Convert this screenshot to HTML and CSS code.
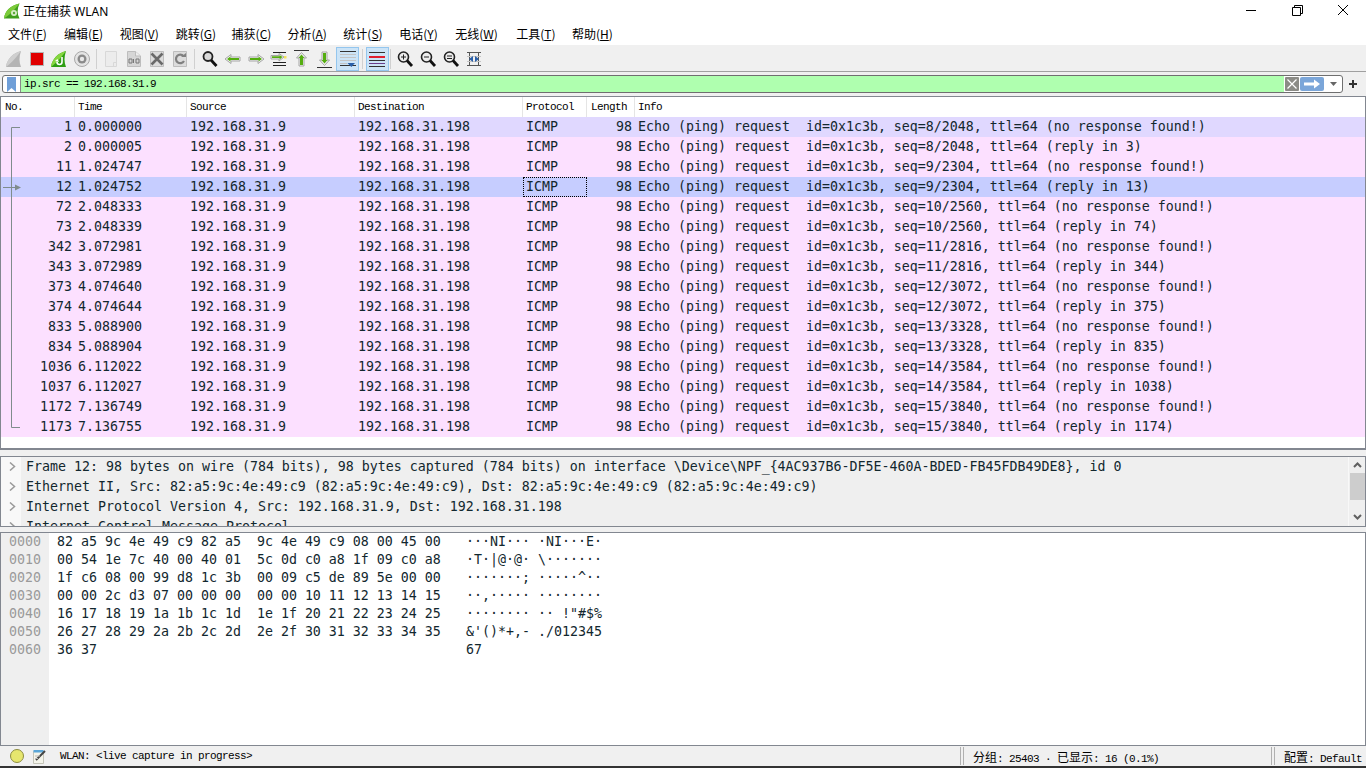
FILE: index.html
```html
<!DOCTYPE html>
<html lang="zh-CN">
<head>
  <meta charset="UTF-8">
  <title>正在捕获 WLAN</title>
  <link rel="stylesheet" href="styles.css">
</head>
<body>
  <div id="app">
    <div class="titlebar">
      <svg class="app-icon" width="16" height="16" viewBox="0 0 16 16"><path d="M0 15.5C1 8 6 2.5 15.5 0.5 13 6 13 11 15.5 15.5Z" fill="#3f9e1c"/><path d="M0 15.5C1 8 6 2.5 15.5 0.5 11 6 7 11 0 15.5Z" fill="#7ccb3a"/><circle cx="10" cy="10" r="3" fill="#d8ecc8"/><circle cx="10" cy="10" r="1.2" fill="#5aa83a"/></svg>
      <span class="title-text">正在捕获 WLAN</span>
      <div class="winbtns">
        <svg width="46" height="22" viewBox="0 0 46 22"><path d="M18 10.5H28" stroke="#000"/></svg>
        <svg width="46" height="22" viewBox="0 0 46 22"><path d="M18.5 7.5H26.5V15.5H18.5ZM20.5 7.5V5.5H28.5V13.5H26.5" fill="none" stroke="#000"/></svg>
        <svg width="46" height="22" viewBox="0 0 46 22"><path d="M18 5L28 15M28 5L18 15" stroke="#000"/></svg>
      </div>
    </div>

    <div class="menubar">
      <span class="menu">文件(<u>F</u>)</span>
      <span class="menu">编辑(<u>E</u>)</span>
      <span class="menu">视图(<u>V</u>)</span>
      <span class="menu">跳转(<u>G</u>)</span>
      <span class="menu">捕获(<u>C</u>)</span>
      <span class="menu">分析(<u>A</u>)</span>
      <span class="menu">统计(<u>S</u>)</span>
      <span class="menu">电话(<u>Y</u>)</span>
      <span class="menu">无线(<u>W</u>)</span>
      <span class="menu">工具(<u>T</u>)</span>
      <span class="menu">帮助(<u>H</u>)</span>
    </div>

    <div class="toolbar">
      <span class="tb tb-first"><svg width="18" height="18" viewBox="0 0 18 18"><path d="M1 17C2 9 8 3 16 1 14 7 14 12 16 17Z" fill="#b4b4b4"/><path d="M1 17C2 9 8 3 16 1 12 6 8 12 1 17Z" fill="#cfcfcf"/></svg></span>
      <span class="tb tb-first"><svg width="16" height="16" viewBox="0 0 16 16"><rect x="1.5" y="1.5" width="13" height="13" fill="#e00000" stroke="#b5b5b5"/></svg></span>
      <span class="tb tb-first"><svg width="18" height="18" viewBox="0 0 18 18"><path d="M1 17C2 9 8 3 16 1 14 7 14 12 16 17Z" fill="#2f9e14"/><path d="M1 17C2 9 8 3 16 1 12 6 8 12 1 17Z" fill="#86d640"/><path d="M12 7V12A2.5 2.5 0 0 1 7 12" fill="none" stroke="#fff" stroke-width="1.6"/><path d="M5 11L7.5 9 9 12Z" fill="#fff"/></svg></span>
      <span class="tb tb-first"><svg width="18" height="18" viewBox="0 0 18 18"><circle cx="9" cy="9" r="7.5" fill="#e4e4e4" stroke="#a8a8a8"/><circle cx="9" cy="9" r="4.5" fill="#8a8a8a"/><circle cx="9" cy="9" r="2.2" fill="#e8e8e8"/></svg></span>
      <span class="tb-sep"></span>
      <span class="tb"><svg width="16" height="18" viewBox="0 0 16 18"><path d="M2.5 1.5H13.5V16.5H2.5Z" fill="#ececec" stroke="#d8d8d8"/><path d="M10.5 16.5V12.5H13.5" fill="none" stroke="#d8d8d8"/></svg></span>
      <span class="tb"><svg width="18" height="18" viewBox="0 0 18 18"><path d="M2.5 1.5H10.5L15.5 6V16.5H2.5Z" fill="#d6d6d6" stroke="#bdbdbd"/><path d="M10.5 1.5V6H15.5" fill="#eee" stroke="#bdbdbd"/><path d="M4 9H7V13H4ZM8.5 9V13M11 9H14V13H11Z" fill="none" stroke="#777"/></svg></span>
      <span class="tb"><svg width="18" height="18" viewBox="0 0 18 18"><path d="M2.5 1.5H15.5V16.5H2.5Z" fill="#dcdcdc" stroke="#bdbdbd"/><path d="M3.5 3.5L14.5 14.5M14.5 3.5L3.5 14.5" stroke="#6a6a6a" stroke-width="2.6"/></svg></span>
      <span class="tb"><svg width="18" height="18" viewBox="0 0 18 18"><path d="M2.5 1.5H15.5V16.5H2.5Z" fill="#dcdcdc" stroke="#bdbdbd"/><path d="M13 11A4.3 4.3 0 1 1 12.5 6" fill="none" stroke="#808080" stroke-width="2.2"/><path d="M10 7H15V3Z" fill="#808080"/></svg></span>
      <span class="tb-sep"></span>
      <span class="tb"><svg width="18" height="18" viewBox="0 0 18 18"><circle cx="7" cy="6.5" r="4.5" fill="#d9d9d9" stroke="#222" stroke-width="1.8"/><path d="M10 10L15.5 16" stroke="#111" stroke-width="2.8"/></svg></span>
      <span class="tb"><svg width="18" height="18" viewBox="0 0 18 18"><path d="M1 9L7 4.5V7H16V11H7V13.5Z" fill="#f1f1f1" stroke="#a6a6a6"/><path d="M3 9L6.500 6.500V8H15V10H6.500V11.500Z" fill="#55ad10"/></svg></span>
      <span class="tb"><svg width="18" height="18" viewBox="0 0 18 18"><path d="M17 9L11 4.500V7H2V11H11V13.500Z" fill="#f1f1f1" stroke="#a6a6a6"/><path d="M15 9L11.500 6.500V8H3V10H11.500V11.500Z" fill="#55ad10"/></svg></span>
      <span class="tb"><svg width="18" height="18" viewBox="0 0 18 18"><path d="M3 2.500H16M3 15.500H16M3 12.500H16" stroke="#222"/><path d="M14 7L9 3.500V5.500H1V9H9V11Z" fill="#f1f1f1" stroke="#a6a6a6"/><path d="M12.500 7L9.500 5V6.300H2V8H9.500V9.500Z" fill="#55ad10"/><rect x="14" y="6" width="2.500" height="2.500" fill="#f1e25c"/></svg></span>
      <span class="tb"><svg width="18" height="20" viewBox="0 0 18 20"><path d="M1 1.500H16" stroke="#333"/><path d="M8.500 3.500L13.500 9H11V17H6V9H3.500Z" fill="#f1f1f1" stroke="#a6a6a6"/><path d="M8.500 5.500L11.500 9H10V16H7V9H5.500Z" fill="#55ad10"/></svg></span>
      <span class="tb"><svg width="18" height="20" viewBox="0 0 18 20"><path d="M1 18.500H16" stroke="#333"/><path d="M8.500 16.500L13.500 11H11V3H6V11H3.500Z" fill="#f1f1f1" stroke="#a6a6a6"/><path d="M8.500 14.500L11.500 11H10V4H7V11H5.500Z" fill="#55ad10"/></svg></span>
      <span class="tb tb-on"><svg width="18" height="18" viewBox="0 0 18 18"><path d="M1 1.500H17M1 15.500H17" stroke="#333"/><path d="M1 4.500H17M1 7.500H17M1 10.500H17M1 13.500H8" stroke="#c4c4c4"/><path d="M8.500 13H16L12.300 17Z" fill="#2a5fa8"/></svg></span>
      <span class="tb-sep"></span>
      <span class="tb tb-on"><svg width="18" height="18" viewBox="0 0 18 18"><path d="M1 2.500H17" stroke="#333"/><path d="M1 6.500H17" stroke="#e02030"/><path d="M1 7.500H17" stroke="#e02030"/><path d="M1 10.500H17" stroke="#333"/><path d="M1 13.500H17" stroke="#6a3d8c"/><path d="M1 16.500H17" stroke="#333"/></svg></span>
      <span class="tb-sep tb-sep-n"></span>
      <span class="tb"><svg width="18" height="18" viewBox="0 0 18 18"><circle cx="7.500" cy="7" r="5" fill="#ececec" stroke="#222" stroke-width="1.600"/><path d="M11 10.500L16 16" stroke="#111" stroke-width="2.800"/><path d="M5 7H10M7.500 4.500V9.500" stroke="#222"/></svg></span>
      <span class="tb"><svg width="18" height="18" viewBox="0 0 18 18"><circle cx="7.500" cy="7" r="5" fill="#ececec" stroke="#222" stroke-width="1.600"/><path d="M11 10.500L16 16" stroke="#111" stroke-width="2.800"/><path d="M5 7H10" stroke="#222"/></svg></span>
      <span class="tb"><svg width="18" height="18" viewBox="0 0 18 18"><circle cx="7.500" cy="7" r="5" fill="#ececec" stroke="#222" stroke-width="1.600"/><path d="M11 10.500L16 16" stroke="#111" stroke-width="2.800"/><path d="M5 6H10M5 8.500H10" stroke="#222"/></svg></span>
      <span class="tb"><svg width="18" height="18" viewBox="0 0 18 18"><path d="M2 2.500H16M2 15.500H16M4.500 2.500V15.500M13.500 2.500V15.500" stroke="#555"/><path d="M2 6.500H16M2 11.500H16" stroke="#c4c4c4"/><path d="M4 9L8 6V12ZM14 9L10 6V12Z" fill="#2a5fa8"/></svg></span>
    </div>

    <div class="filterbar">
      <div class="filter">
        <span class="bookmark"><svg width="9" height="15" viewBox="0 0 9 15"><path d="M0 0H9V15L4.500 11 0 15Z" fill="#6f9fd8"/></svg></span>
        <span class="filter-text">ip.src == 192.168.31.9</span>
        <span class="filter-clear"><svg width="14" height="14" viewBox="0 0 14 14"><rect width="14" height="14" rx="1" fill="#8b8b86"/><path d="M2.500 2.500L11.500 11.500M11.500 2.500L2.500 11.500" stroke="#fff" stroke-width="1.200"/></svg></span>
        <span class="filter-apply"><svg width="24" height="14" viewBox="0 0 24 14"><rect width="24" height="14" rx="2" fill="#7ba6d9"/><path d="M4 5.500H14V2.500L20 7 14 11.500V8.500H4Z" fill="#fff"/></svg></span>
        <span class="filter-drop"><svg width="7" height="4" viewBox="0 0 7 4"><path d="M0 0H7L3.500 4Z" fill="#666"/></svg></span>
      </div>
      <svg class="filter-plus" width="10" height="10" viewBox="0 0 10 10"><path d="M5 1V9M1 5H9" stroke="#333" stroke-width="2"/></svg>
    </div>

    <div class="packets">
      <div class="row head">
        <div>No.</div><div>Time</div><div>Source</div><div>Destination</div><div>Protocol</div><div>Length</div><div>Info</div>
      </div>
      <div class="row pkt first">
        <div class="num">1</div><div>0.000000</div><div>192.168.31.9</div><div>192.168.31.198</div><div>ICMP</div><div class="num">98</div><div>Echo (ping) request  id=0x1c3b, seq=8/2048, ttl=64 (no response found!)</div>
      </div>
      <div class="row pkt">
        <div class="num">2</div><div>0.000005</div><div>192.168.31.9</div><div>192.168.31.198</div><div>ICMP</div><div class="num">98</div><div>Echo (ping) request  id=0x1c3b, seq=8/2048, ttl=64 (reply in 3)</div>
      </div>
      <div class="row pkt">
        <div class="num">11</div><div>1.024747</div><div>192.168.31.9</div><div>192.168.31.198</div><div>ICMP</div><div class="num">98</div><div>Echo (ping) request  id=0x1c3b, seq=9/2304, ttl=64 (no response found!)</div>
      </div>
      <div class="row pkt selected">
        <div class="num">12</div><div>1.024752</div><div>192.168.31.9</div><div>192.168.31.198</div><div class="focus">ICMP</div><div class="num">98</div><div>Echo (ping) request  id=0x1c3b, seq=9/2304, ttl=64 (reply in 13)</div>
      </div>
      <div class="row pkt">
        <div class="num">72</div><div>2.048333</div><div>192.168.31.9</div><div>192.168.31.198</div><div>ICMP</div><div class="num">98</div><div>Echo (ping) request  id=0x1c3b, seq=10/2560, ttl=64 (no response found!)</div>
      </div>
      <div class="row pkt">
        <div class="num">73</div><div>2.048339</div><div>192.168.31.9</div><div>192.168.31.198</div><div>ICMP</div><div class="num">98</div><div>Echo (ping) request  id=0x1c3b, seq=10/2560, ttl=64 (reply in 74)</div>
      </div>
      <div class="row pkt">
        <div class="num">342</div><div>3.072981</div><div>192.168.31.9</div><div>192.168.31.198</div><div>ICMP</div><div class="num">98</div><div>Echo (ping) request  id=0x1c3b, seq=11/2816, ttl=64 (no response found!)</div>
      </div>
      <div class="row pkt">
        <div class="num">343</div><div>3.072989</div><div>192.168.31.9</div><div>192.168.31.198</div><div>ICMP</div><div class="num">98</div><div>Echo (ping) request  id=0x1c3b, seq=11/2816, ttl=64 (reply in 344)</div>
      </div>
      <div class="row pkt">
        <div class="num">373</div><div>4.074640</div><div>192.168.31.9</div><div>192.168.31.198</div><div>ICMP</div><div class="num">98</div><div>Echo (ping) request  id=0x1c3b, seq=12/3072, ttl=64 (no response found!)</div>
      </div>
      <div class="row pkt">
        <div class="num">374</div><div>4.074644</div><div>192.168.31.9</div><div>192.168.31.198</div><div>ICMP</div><div class="num">98</div><div>Echo (ping) request  id=0x1c3b, seq=12/3072, ttl=64 (reply in 375)</div>
      </div>
      <div class="row pkt">
        <div class="num">833</div><div>5.088900</div><div>192.168.31.9</div><div>192.168.31.198</div><div>ICMP</div><div class="num">98</div><div>Echo (ping) request  id=0x1c3b, seq=13/3328, ttl=64 (no response found!)</div>
      </div>
      <div class="row pkt">
        <div class="num">834</div><div>5.088904</div><div>192.168.31.9</div><div>192.168.31.198</div><div>ICMP</div><div class="num">98</div><div>Echo (ping) request  id=0x1c3b, seq=13/3328, ttl=64 (reply in 835)</div>
      </div>
      <div class="row pkt">
        <div class="num">1036</div><div>6.112022</div><div>192.168.31.9</div><div>192.168.31.198</div><div>ICMP</div><div class="num">98</div><div>Echo (ping) request  id=0x1c3b, seq=14/3584, ttl=64 (no response found!)</div>
      </div>
      <div class="row pkt">
        <div class="num">1037</div><div>6.112027</div><div>192.168.31.9</div><div>192.168.31.198</div><div>ICMP</div><div class="num">98</div><div>Echo (ping) request  id=0x1c3b, seq=14/3584, ttl=64 (reply in 1038)</div>
      </div>
      <div class="row pkt">
        <div class="num">1172</div><div>7.136749</div><div>192.168.31.9</div><div>192.168.31.198</div><div>ICMP</div><div class="num">98</div><div>Echo (ping) request  id=0x1c3b, seq=15/3840, ttl=64 (no response found!)</div>
      </div>
      <div class="row pkt">
        <div class="num">1173</div><div>7.136755</div><div>192.168.31.9</div><div>192.168.31.198</div><div>ICMP</div><div class="num">98</div><div>Echo (ping) request  id=0x1c3b, seq=15/3840, ttl=64 (reply in 1174)</div>
      </div>
      <!-- conversation line over the No. column -->
      <svg class="related" width="22" height="320" viewBox="0 0 22 320"><path d="M19 10.500H10.500V310.500H19M2 70.500H14" fill="none" stroke="#7f8c8c"/><path d="M14 67.500L20 70.500 14 73.500Z" fill="#7f8c8c"/></svg>
    </div>

    <div class="details">
      <div class="tree">
        <div class="node"><svg class="chev" width="7" height="9" viewBox="0 0 7 9"><path d="M1 0.500L5.500 4.500 1 8.500" fill="none" stroke="#999" stroke-width="1.500"/></svg>Frame 12: 98 bytes on wire (784 bits), 98 bytes captured (784 bits) on interface \Device\NPF_{4AC937B6-DF5E-460A-BDED-FB45FDB49DE8}, id 0</div>
        <div class="node"><svg class="chev" width="7" height="9" viewBox="0 0 7 9"><path d="M1 0.500L5.500 4.500 1 8.500" fill="none" stroke="#999" stroke-width="1.500"/></svg>Ethernet II, Src: 82:a5:9c:4e:49:c9 (82:a5:9c:4e:49:c9), Dst: 82:a5:9c:4e:49:c9 (82:a5:9c:4e:49:c9)</div>
        <div class="node"><svg class="chev" width="7" height="9" viewBox="0 0 7 9"><path d="M1 0.500L5.500 4.500 1 8.500" fill="none" stroke="#999" stroke-width="1.500"/></svg>Internet Protocol Version 4, Src: 192.168.31.9, Dst: 192.168.31.198</div>
        <div class="node"><svg class="chev" width="7" height="9" viewBox="0 0 7 9"><path d="M1 0.500L5.500 4.500 1 8.500" fill="none" stroke="#999" stroke-width="1.500"/></svg>Internet Control Message Protocol</div>
      </div>
      <div class="scroll">
        <svg width="9" height="6" viewBox="0 0 9 6"><path d="M1 5L4.500 1.500 8 5" fill="none" stroke="#606060" stroke-width="2"/></svg>
        <div class="thumb"></div>
        <svg class="scroll-down" width="9" height="6" viewBox="0 0 9 6"><path d="M1 1L4.500 4.500 8 1" fill="none" stroke="#606060" stroke-width="2"/></svg>
      </div>
    </div>

    <div class="bytes">
      <pre class="offs">0000
0010
0020
0030
0040
0050
0060</pre>
      <pre class="hex">82 a5 9c 4e 49 c9 82 a5  9c 4e 49 c9 08 00 45 00
00 54 1e 7c 40 00 40 01  5c 0d c0 a8 1f 09 c0 a8
1f c6 08 00 99 d8 1c 3b  00 09 c5 de 89 5e 00 00
00 00 2c d3 07 00 00 00  00 00 10 11 12 13 14 15
16 17 18 19 1a 1b 1c 1d  1e 1f 20 21 22 23 24 25
26 27 28 29 2a 2b 2c 2d  2e 2f 30 31 32 33 34 35
36 37</pre>
      <pre class="ascii">···NI··· ·NI···E·
·T·|@·@· \·······
·······; ·····^··
··,····· ········
········ ·· !"#$%
&amp;'()*+,- ./012345
67</pre>
    </div>

    <div class="statusbar">
      <span class="led"></span>
      <svg class="note" width="14" height="15" viewBox="0 0 14 15"><path d="M0.500 2.500H10.500V14.500H0.500Z" fill="#f4f4ea" stroke="#c4c4b8"/><rect x="0.500" y="1" width="10" height="2.500" fill="#5aa6d8"/><path d="M3 11L12 2" stroke="#444" stroke-width="2"/><path d="M2 7H7M2 9.500H5" stroke="#b8b8b8"/></svg>
      <span class="st-file">WLAN: &lt;live capture in progress&gt;</span>
      <span class="st-sep"></span>
      <span class="st-count"><span class="cjk">分组</span>: 25403 · <span class="cjk">已显示</span>: 16 (0.1%)</span>
      <span class="st-sep"></span>
      <span class="st-prof"><span class="cjk">配置</span>: Default</span>
    </div>
  </div>
</body>
</html>
```

FILE: styles.css
```css
*{margin: 0; padding: 0; box-sizing: border-box;}

body{
  background-color: #f0f0f0;
  overflow: hidden;
}

#app{
  width: 1366px;
  height: 768px;
  display: flex;
  flex-direction: column;
  overflow: hidden;
  border-bottom: 2px solid #333;
  font-family: "Noto Sans CJK SC", sans-serif;
  font-size: 12px;
  color: #000;
}

/* title + menu */
.titlebar{
  height: 22px;
  display: flex;
  align-items: center;
  background-color: #fff;
  padding-left: 4px;
}
.app-icon{margin-top: -1px;}
.title-text{
  margin-left: 3px;
  font-family: "Noto Sans", "Noto Sans CJK SC", sans-serif;
  font-size: 12px;
  margin-top: -1px;
}
.winbtns{
  margin-left: auto;
  display: flex;
}
.menubar{
  height: 24px;
  display: flex;
  align-items: center;
  background-color: #fff;
  border-bottom: 1px solid #f0f0f0;
}
.menu{
  width: 55.900px;
  padding-left: 8px;
  white-space: nowrap;
  line-height: 18px;
}
.menu:nth-child(9){width: 61px;}

/* toolbar */
.toolbar{
  height: 26px;
  display: flex;
  align-items: center;
  padding-left: 3px;
  border-bottom: 1px solid #a0a0a0;
}
.tb{
  width: 23px;
  height: 24px;
  display: flex;
  align-items: center;
  justify-content: center;
  border: 1px solid transparent;
}
.tb-first{width: 22.500px;}
.tb-on{
  background-color: #cce4f7;
  border: 1px solid #94c6ee;
}
.tb-sep{
  width: 6.500px;
  height: 20px;
  background: linear-gradient(#d0d0d0, #d0d0d0) center / 1px 100% no-repeat;
}
.tb-sep-n{width: 4.500px;}

/* display filter */
.filterbar{
  height: 24px;
  display: flex;
  align-items: center;
  padding: 3px 0 3px 2px;
}
.filter{
  width: 1341px;
  height: 18px;
  display: flex;
  align-items: center;
  background-color: #fff;
  border: 1px solid #6f6f6f;
  border-radius: 3px;
}
.bookmark{
  width: 18px;
  height: 16px;
  display: flex;
  justify-content: center;
  border-right: 1px solid #8a8a8a;
  padding-top: 1px;
}
.filter-text{
  flex: 1;
  height: 16px;
  padding-left: 3px;
  line-height: 16px;
  background-color: #afffaf;
  font-family: "Liberation Mono", monospace;
  font-size: 11px;
  letter-spacing: -0.600px;
  white-space: pre;
}
.filter-clear{
  display: flex;
  width: 16px;
  padding-left: 1px;
}
.filter-apply{
  display: flex;
  width: 25px;
}
.filter-drop{
  width: 17px;
  display: flex;
  justify-content: center;
}
.filter-plus{margin-left: 5px;}

/* packet list */
.packets{
  position: relative;
  height: 354px;
  background-color: #fff;
  border: 1px solid #828790;
  border-top-width: 1px;
  border-bottom-width: 2px;
}
.row{
  display: grid;
  grid-template-columns: 74px 112px 168px 168px 64px 48px 1fr;
  height: 20px;
  line-height: 20px;
  white-space: pre;
}
.row>div{padding-left: 3px;}
.row>.num{
  padding-left: 0;
  padding-right: 3px;
  text-align: right;
}
.head{
  font-family: "Liberation Mono", monospace;
  font-size: 11px;
  letter-spacing: -0.600px;
  color: #000;
}
.head>div{border-right: 1px solid #e5e5e5;}
.head>div:first-child{padding-left: 4px;}
.head>div:nth-child(6){padding-left: 4px;}
.head>div:last-child{border-right: 0;}
.pkt{
  background-color: #fce0ff;
  color: #12272e;
  font-family: "DejaVu Sans Mono", monospace;
  font-size: 13.290px;
}
.pkt.first{background-color: #e0d8ff;}
.pkt.selected{background-color: #c6cdff;}
.pkt .focus{outline: 1px dotted #000; outline-offset: -1px;}
.related{
  position: absolute;
  left: 0;
  top: 20px;
}

/* packet details */
.details{
  height: 71px;
  margin-top: 6px;
  display: flex;
  background-color: #efefef;
  border: 1px solid #828790;
  border-bottom-width: 1px;
  overflow: hidden;
}
.tree{
  flex: 1;
  overflow: hidden;
  background: linear-gradient(#f8f8f8, #f8f8f8) left / 20px 100% no-repeat;
}
.node{
  height: 20px;
  line-height: 20px;
  white-space: pre;
  color: #12272e;
  font-family: "DejaVu Sans Mono", monospace;
  font-size: 13.290px;
}
.chev{margin: 0 10px 0 8px;}
.scroll{
  width: 17px;
  display: flex;
  flex-direction: column;
  align-items: center;
  border-left: 1px solid #f8f8f8;
  padding-top: 5px;
}
.thumb{
  width: 15px;
  height: 27px;
  margin-top: 5px;
  background-color: #cdcdcd;
}
.scroll-down{margin-top: 14px;}

/* packet bytes */
.bytes{
  height: 214px;
  margin-top: 5px;
  display: flex;
  background-color: #fff;
  border: 1px solid #828790;
  overflow: hidden;
}
.bytes pre{
  font-family: "DejaVu Sans Mono", monospace;
  font-size: 13.290px;
  line-height: 18px;
  color: #12272e;
}
.offs{
  width: 48px;
  padding-left: 8px;
  background-color: #efefef;
}
.bytes .offs{color: #9a9a9a;}
.hex{
  width: 417px;
  padding-left: 8px;
}

/* status bar */
.statusbar{
  height: 20px;
  display: flex;
  align-items: center;
  font-family: "Liberation Mono", monospace;
  font-size: 11px;
  letter-spacing: -0.600px;
  white-space: pre;
}
.led{
  width: 14px;
  height: 14px;
  margin-left: 10px;
  background-color: #e6e66e;
  border: 1px solid #8c8c40;
  border-radius: 50%;
}
.note{margin-left: 9px;}
.st-file{
  width: 900px;
  margin-left: 13px;
}
.st-sep{
  width: 4px;
  height: 18px;
  border-left: 1px solid #b0b0b0;
  border-right: 1px solid #b0b0b0;
}
.st-count{
  width: 307px;
  padding-left: 9px;
}
.st-prof{padding-left: 9px;}
.cjk{
  font-family: "Noto Sans CJK SC", sans-serif;
  font-size: 12px;
  letter-spacing: 0;
}
```
